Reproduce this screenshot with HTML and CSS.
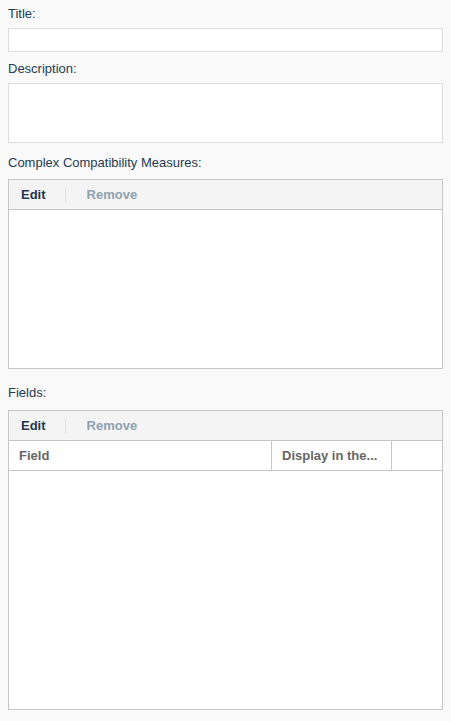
FILE: index.html
```html
<!DOCTYPE html>
<html>
<head>
<meta charset="utf-8">
<link rel="stylesheet" href="styles.css">
</head>
<body>
<div class="form">
  <div class="field field-title">
    <label class="label">Title:</label>
    <div class="input"></div>
  </div>
  <div class="field field-desc">
    <label class="label">Description:</label>
    <div class="textarea"></div>
  </div>
  <div class="field field-measures">
    <label class="label label-panel">Complex Compatibility Measures:</label>
    <div class="panel panel-measures">
      <div class="toolbar">
        <span class="btn btn-edit">Edit</span>
        <span class="sep"></span>
        <span class="btn btn-remove">Remove</span>
      </div>
    </div>
  </div>
  <div class="field field-fields">
    <label class="label label-panel">Fields:</label>
    <div class="panel panel-fields">
      <div class="toolbar">
        <span class="btn btn-edit">Edit</span>
        <span class="sep"></span>
        <span class="btn btn-remove">Remove</span>
      </div>
      <div class="grid-head">
        <div class="col col-field">Field</div>
        <div class="col col-display">Display in the...</div>
        <div class="col col-extra"></div>
      </div>
    </div>
  </div>
</div>
</body>
</html>
```

FILE: styles.css
```css
html, body {
  margin: 0;
  padding: 0;
  background: #f9f9f9;
}
body {
  font-family: "Liberation Sans", Arial, sans-serif;
  font-size: 13px;
  color: #253b52;
}
.form {
  padding: 6px 8px 0 8px;
  width: 435px;
}
.field {
  display: flex;
  flex-direction: column;
}
.label {
  display: block;
  line-height: 15px;
  margin-bottom: 7px;
  color: #253b52;
}
.label-panel {
  margin-bottom: 9px;
}
.field-desc {
  margin-top: 9px;
}
.field-measures {
  margin-top: 12px;
}
.field-fields {
  margin-top: 16px;
}
.field-fields .label-panel {
  margin-bottom: 10px;
}
.input {
  box-sizing: border-box;
  height: 24px;
  background: #fff;
  border: 1px solid #dcdcdc;
}
.textarea {
  box-sizing: border-box;
  height: 60px;
  background: #fff;
  border: 1px solid #dcdcdc;
}
.panel {
  box-sizing: border-box;
  background: #fff;
  border: 1px solid #c6c6c6;
  display: flex;
  flex-direction: column;
}
.panel-measures {
  height: 190px;
}
.panel-fields {
  height: 300px;
}
.toolbar {
  box-sizing: border-box;
  height: 30px;
  background: #f4f4f4;
  border-bottom: 1px solid #c6c6c6;
  display: flex;
  align-items: center;
  padding-left: 12px;
}
.btn {
  font-weight: bold;
  font-size: 13px;
  line-height: 15px;
}
.btn-edit {
  color: #1f3650;
}
.btn-remove {
  color: #8ea1b1;
}
.sep {
  width: 1px;
  height: 14px;
  background: #dedede;
  margin: 0 21px 0 19px;
}
.grid-head {
  box-sizing: border-box;
  height: 30px;
  border-bottom: 1px solid #c6c6c6;
  display: flex;
}
.col {
  box-sizing: border-box;
  display: flex;
  align-items: center;
  font-weight: bold;
  color: #666;
  font-size: 13px;
}
.col-field {
  width: 263px;
  padding-left: 10px;
  border-right: 1px solid #c6c6c6;
}
.col-display {
  width: 120px;
  padding-left: 10px;
  border-right: 1px solid #c6c6c6;
  white-space: nowrap;
}
.col-extra {
  flex: 1;
}
```
